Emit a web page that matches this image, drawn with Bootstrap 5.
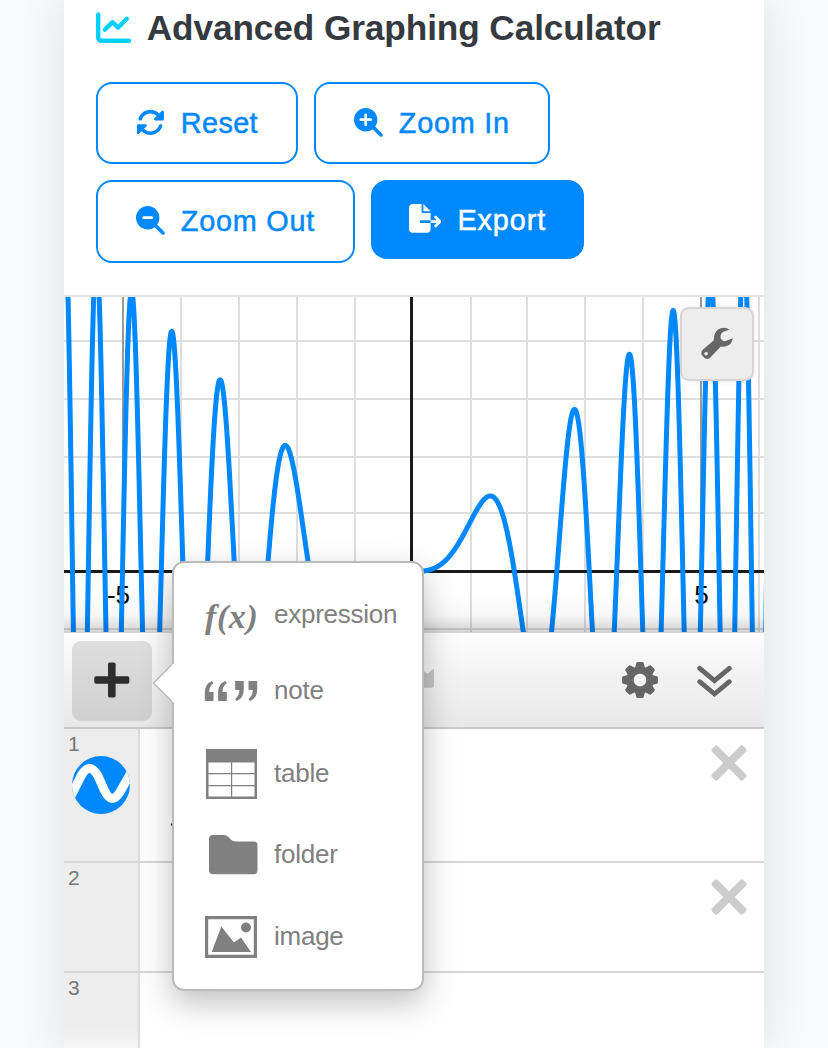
<!DOCTYPE html>
<html lang="en">
<head>
<meta charset="utf-8">
<meta name="viewport" content="width=device-width, initial-scale=1">
<title>Advanced Graphing Calculator</title>
<link href="https://cdn.jsdelivr.net/npm/bootstrap@5.3.0/dist/css/bootstrap.min.css" rel="stylesheet">
<style>
body{background:#f6fafb;font-family:"Liberation Sans",Arial,sans-serif;height:1048px;overflow:hidden}
.calc{width:700px;height:1048px;background:#fff;box-shadow:0 0 44px rgba(0,0,0,.1)}
.calc-head{height:297px;border-bottom:2px solid #e6e6e6;padding:0 32px}
.calc-title{font-size:35.2px;line-height:42px;font-weight:700;letter-spacing:-.08px;color:#343a40;padding-top:7px;height:82px;gap:15.5px}
.calc-title svg{width:35.2px;height:35.2px;margin-top:2.500px;color:#00cfff}
.tool{--bs-btn-font-size:28.8px;--bs-btn-line-height:43.2px;--bs-btn-padding-x:38px;--bs-btn-padding-y:17.6px;--bs-btn-border-radius:16px;--bs-btn-border-width:2px;--bs-btn-color:#0088ff;--bs-btn-border-color:#0088ff;height:82.4px;gap:16px;letter-spacing:.78px;-webkit-text-stroke:.5px currentColor}
.tool svg{height:28.8px;position:relative;top:-1px}
.tool-reset{letter-spacing:.4px}
.tool-fill{--bs-btn-bg:#0088ff;--bs-btn-color:#fff;--bs-btn-border-width:0;height:79px;letter-spacing:.9px}
.tool-fill span{position:relative;top:1px}
.plot{height:335px}
.plot::after{content:"";position:absolute;inset:auto 0 0 0;height:38px;background:linear-gradient(rgba(0,0,0,0),rgba(0,0,0,.03) 55%,rgba(0,0,0,.17))}
.wrench{right:10px;top:10px;width:74px;height:74px;border:2px solid #d5d5d5;border-radius:9px;background:#ededed;box-shadow:0 0 8px rgba(0,0,0,.08)}
.bar{height:97px;border-bottom:2px solid #c8c8c8;border-top:1px solid #d4d4d4;background:linear-gradient(#fcfcfc,#e8e8e8);padding:7px 31px 0 8px}
.add{width:80px;height:80px;margin-top:1px;padding:0 0 2px;border-radius:9px;background:linear-gradient(#dedede,#d0d0d0);border:0}
.rowx{border-bottom:2px solid #d6d6d6;height:110px}
.rowx.tall{height:134px}
.gutter{width:76px;background:#ededed;border-right:2px solid #ddd;color:#777;font-size:21px;line-height:24px;padding:3px 0 0 4px}
.clear{margin:15px 16px 0 0}
.dot{width:3px;height:3px;margin:94px 0 0 31px;border-radius:50%;background:#000}
.wave{margin-left:4px}
.peek{margin-right:188px}
.fold{margin-left:39px}
.fade-out{background:linear-gradient(#ededed 55px,#f6f6f6)}
.last{height:75px}
.menu{left:108px;top:561px;width:252px;height:430px;border:2px solid #bbb;border-radius:12px;background:#fff;box-shadow:0 12px 32px rgba(0,0,0,.25);padding:13.500px 0 0 30px;display:grid;grid-template-rows:76px 76px 90px 72px 92px;color:#808080;font-size:26px;letter-spacing:-.25px}
.menu .pic{width:54px;margin:1px 16px 0 0}
.fx{font-family:"Liberation Serif",serif;font-style:italic;font-weight:700;font-size:34px;letter-spacing:.6px;padding:2px 0 0 1px}
.arrow{left:-22px;top:98px}
</style>
</head>
<body>
<main class="calc mx-auto position-relative">
  <header class="calc-head">
    <h1 class="calc-title d-flex align-items-start m-0">
      <svg viewBox="0 0 512 512" fill="currentColor"><path d="M64 64c0-17.7-14.3-32-32-32S0 46.3 0 64V400c0 44.2 35.8 80 80 80H480c17.7 0 32-14.3 32-32s-14.3-32-32-32H80c-8.8 0-16-7.2-16-16V64zm406.6 86.6c12.5-12.5 12.5-32.8 0-45.3s-32.8-12.5-45.3 0L320 210.7l-57.4-57.4c-12.5-12.5-32.8-12.5-45.3 0l-112 112c-12.5 12.5-12.5 32.8 0 45.3s32.8 12.5 45.3 0L240 221.3l57.4 57.4c12.5 12.5 32.8 12.5 45.3 0l128-128z"/></svg>
      <span>Advanced Graphing Calculator</span>
    </h1>
    <div class="d-flex flex-wrap gap-3 align-items-start">
      <button class="btn tool tool-reset d-flex align-items-center"><svg viewBox="0 0 512 512" fill="currentColor"><path d="M142.9 142.9c62.2-62.2 162.7-62.5 225.3-1L327 183c-6.9 6.9-8.9 17.2-5.2 26.2s12.5 14.8 22.2 14.8H472c13.3 0 24-10.7 24-24V72c0-9.7-5.8-18.5-14.8-22.2s-19.3-1.7-26.2 5.2L413.4 96.6c-87.6-86.5-228.7-86.2-315.8 1C73.2 122 55.6 150.7 44.8 181.4c-5.9 16.7 2.9 34.9 19.5 40.8s34.9-2.9 40.8-19.5c7.7-21.8 20.2-42.3 37.8-59.8zM16 312V440c0 9.7 5.8 18.5 14.8 22.2s19.3 1.7 26.2-5.2l41.6-41.6c87.6 86.5 228.7 86.2 315.8-1c24.4-24.4 42.1-53.1 52.9-83.7c5.9-16.7-2.9-34.9-19.5-40.8s-34.9 2.9-40.8 19.5c-7.7 21.8-20.2 42.3-37.8 59.8c-62.2 62.2-162.7 62.5-225.3 1L185 329c6.9-6.9 8.9-17.2 5.2-26.2s-12.5-14.8-22.2-14.8H40c-13.3 0-24 10.7-24 24z"/></svg><span>Reset</span></button>
      <button class="btn tool d-flex align-items-center"><svg viewBox="0 0 512 512" fill="currentColor"><path d="M416 208c0 45.9-14.9 88.3-40 122.7L502.6 457.4c12.5 12.5 12.5 32.8 0 45.3s-32.8 12.5-45.3 0L330.7 376c-34.4 25.2-76.8 40-122.7 40C93.1 416 0 322.9 0 208S93.1 0 208 0S416 93.1 416 208zM184 296c0 13.3 10.7 24 24 24s24-10.7 24-24V232h64c13.3 0 24-10.7 24-24s-10.7-24-24-24H232V120c0-13.3-10.7-24-24-24s-24 10.7-24 24v64H120c-13.3 0-24 10.7-24 24s10.7 24 24 24h64v64z"/></svg><span>Zoom In</span></button>
      <button class="btn tool d-flex align-items-center"><svg viewBox="0 0 512 512" fill="currentColor"><path d="M416 208c0 45.9-14.9 88.3-40 122.7L502.6 457.4c12.5 12.5 12.5 32.8 0 45.3s-32.8 12.5-45.3 0L330.7 376c-34.4 25.2-76.8 40-122.7 40C93.1 416 0 322.9 0 208S93.1 0 208 0S416 93.1 416 208zM136 184c-13.3 0-24 10.7-24 24s10.7 24 24 24H280c13.3 0 24-10.7 24-24s-10.7-24-24-24H136z"/></svg><span>Zoom Out</span></button>
      <button class="btn tool tool-fill d-flex align-items-center"><svg viewBox="0 0 576 512" fill="currentColor"><path d="M0 64C0 28.7 28.7 0 64 0H224V128c0 17.7 14.3 32 32 32H384V288H216c-13.3 0-24 10.7-24 24s10.7 24 24 24H384V448c0 35.3-28.7 64-64 64H64c-35.3 0-64-28.7-64-64V64zM384 336V288H494.1l-39-39c-9.4-9.4-9.4-24.6 0-33.9s24.6-9.4 33.9 0l80 80c9.4 9.4 9.4 24.6 0 33.9l-80 80c-9.4 9.4-24.6 9.4-33.9 0s-9.4-24.6 0-33.9l39-39H384zm0-208H256V0L384 128z"/></svg><span>Export</span></button>
    </div>
  </header>

  <section class="plot position-relative">
    <svg class="d-block" width="700" height="335" viewBox="64 297 700 335">
      <path stroke="#000" stroke-opacity=".13" stroke-width="2" d="M181 297V632M239 297V632M297 297V632M355 297V632M471 297V632M527 297V632M585 297V632M643 297V632M759 297V632M64 341H764M64 399H764M64 457H764M64 513H764M64 629H764"/>
      <path stroke="#999" stroke-width="2" d="M123 297V632M701 297V632"/>
      <path stroke="#1a1a1a" stroke-width="3" d="M411.500 297V632M64 571.500H764"/>
      <g font-size="26" font-family="Liberation Sans, Arial, sans-serif" text-anchor="middle"><text x="118.500" y="603.500">-5</text><text x="701.500" y="603.500">5</text></g>
      <path id="curve" fill="none" stroke="#0088ff" stroke-width="5" stroke-linejoin="round"/>
    </svg>
    <button class="wrench position-absolute p-0 d-flex align-items-center justify-content-center">
      <svg width="34" height="34" viewBox="0 0 34 34"><path fill="#666" fill-rule="evenodd" d="M29.700 2.500 23.500 4.800Q20.300 6.500 20.500 10.300 21.300 14 25 14.300L32.700 11.200Q32.300 15.500 29 18 25.500 20.300 20.800 19.500L10.800 30Q8 33.200 4.600 31L2 28.300Q.2 25.500 2.800 22.800L13.800 13.200Q13.500 5.800 18.300 2.200 23.500-1 29.700 2.500zM6 24.900a1.800 1.800 0 1 0 .1 0z"/></svg>
    </button>
  </section>

  <nav class="bar d-flex align-items-start">
    <button class="add d-flex align-items-center justify-content-center"><svg width="36" height="36" viewBox="0 0 36 36" fill="#2d2d2d"><rect x="14" y=".5" width="7.600" height="35" rx="1.700"/><rect x=".3" y="14.200" width="35" height="7.600" rx="1.700"/></svg></button>
    <svg class="peek ms-auto" width="24" height="80" viewBox="0 0 24 80"><path fill="#c4c4c4" d="M8 26 17.500 34 22.500 29.500Q24 28.500 24 30V45Q24 47.700 21.500 47.700H8z"/></svg>
    <svg width="36" height="80" viewBox="-18 -40 36 80"><g fill="#666"><path fill-rule="evenodd" d="M0-13.700a13.700 13.700 0 1 0 .01 0zM0-6.300a6.300 6.300 0 1 1-.01 0z"/><g id="t"><path id="tooth" d="M-5-12l1.300-4.900q.2-1 1.200-1h5q1 0 1.200 1l1.300 4.900z"/><use href="#tooth" transform="rotate(90)"/><use href="#tooth" transform="rotate(180)"/><use href="#tooth" transform="rotate(270)"/></g><use href="#t" transform="rotate(45)"/></g></svg>
    <svg class="fold" width="36" height="80" viewBox="0 0 36 80" fill="none" stroke="#666" stroke-width="4.800" stroke-linecap="round"><path d="M2.700 28.300 17.500 40.600 32.300 28.300M2.700 41.700 17.500 54 32.300 41.700"/></svg>
  </nav>

  <div class="rowx tall d-flex">
    <div class="gutter">1
      <svg class="wave d-block" width="58" height="58" viewBox="0 0 58 58"><defs><clipPath id="disc"><circle cx="29" cy="29" r="29"/></clipPath></defs><circle cx="29" cy="29" r="29" fill="#0088ff"/><path clip-path="url(#disc)" d="M-2 42 9 20Q17.500 4.800 26 20L32 33.500Q39.500 50 48 36L60 15" fill="none" stroke="#fff" stroke-width="9"/></svg>
    </div>
    <span class="dot"></span>
    <svg class="clear ms-auto" width="38" height="38" viewBox="-19 -19 38 38" fill="#ccc"><g transform="rotate(45)"><rect x="-22" y="-4" width="44" height="8" rx="2"/><rect x="-4" y="-22" width="8" height="44" rx="2"/></g></svg>
  </div>
  <div class="rowx d-flex">
    <div class="gutter">2</div>
    <svg class="clear ms-auto" width="38" height="38" viewBox="-19 -19 38 38" fill="#ccc"><g transform="rotate(45)"><rect x="-22" y="-4" width="44" height="8" rx="2"/><rect x="-4" y="-22" width="8" height="44" rx="2"/></g></svg>
  </div>
  <div class="last d-flex"><div class="gutter fade-out">3</div></div>

  <div class="menu position-absolute">
    <svg class="arrow position-absolute" width="23" height="44" viewBox="0 0 23 44"><path d="M22 1.500 1.500 22 22 42.500" fill="#fff" stroke="#bbb" stroke-width="1.500"/><path d="M20.500 3H23V41H20.500z" fill="#fff"/></svg>
    <div class="d-flex align-items-center"><span class="pic fx">f(x)</span>expression</div>
    <div class="d-flex align-items-center"><svg class="pic" height="20" viewBox="0 0 54 20" fill="#808080"><path id="q" d="M8 0Q.8 2.500 .8 12V20H9.500V11H5.200Q5.200 5 9.500 2z"/><use href="#q" x="13.300"/><use href="#q" transform="rotate(180 20.300 10)"/><use href="#q" transform="rotate(180 27 10)"/></svg>note</div>
    <div class="d-flex align-items-center"><svg class="pic" height="52" viewBox="0 0 54 52"><path fill="#808080" fill-rule="evenodd" d="M2 1H53V51H2zM4.500 14.500V25H27V14.500zM28.200 14.500V25H50.500V14.500zM4.500 26.200V37H27V26.200zM28.200 26.200V37H50.500V26.200zM4.500 38.200V48.500H27V38.200zM28.200 38.200V48.500H50.500V38.200z"/></svg>table</div>
    <div class="d-flex align-items-center"><svg class="pic" height="40" viewBox="0 0 54 40"><path fill="#808080" d="M5 4q0-4 4-4H20q3 0 5 2.500l2 2.300Q28.500 6.500 32 6.500H49.500q4 0 4 4V35q0 4.300-4 4.300H9q-4 0-4-4.300z"/></svg>folder</div>
    <div class="d-flex align-items-center"><svg class="pic" height="44" viewBox="0 0 54 44"><path fill="none" stroke="#808080" stroke-width="3.200" d="M2.600 2.600H51.400V41.400H2.600z"/><path fill="#808080" d="M7.700 37 17.300 11.500 30 27.500 37 22.500 47 37z"/><circle cx="42" cy="12.500" r="5" fill="#808080"/></svg>image</div>
  </div>
</main>
<script>
// y = x sin(x^2), 57.75 px per unit, origin at (412, 571.5)
const unit = 57.75, pts = [];
for (let px = 60; px <= 768; px += 0.25) {
  const x = (px - 412) / unit;
  pts.push(px + ' ' + (571.5 - unit * x * Math.sin(x * x)).toFixed(2));
}
document.getElementById('curve').setAttribute('d', 'M' + pts.join('L'));
</script>
<script src="https://cdn.jsdelivr.net/npm/bootstrap@5.3.0/dist/js/bootstrap.bundle.min.js"></script>
</body>
</html>
